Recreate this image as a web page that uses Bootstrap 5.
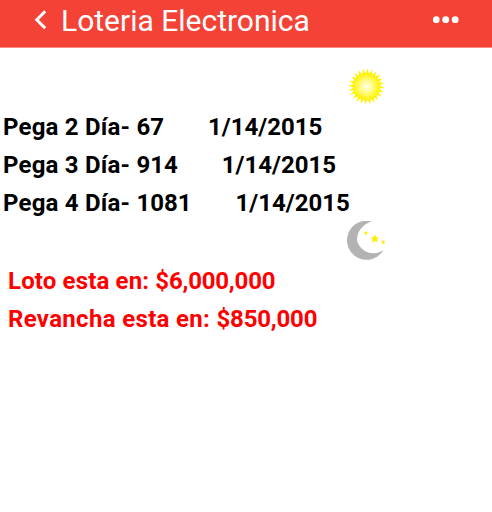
<!DOCTYPE html>
<html lang="es">
  <head>
    <meta charset="utf-8">
    <meta name="viewport" content="width=device-width, initial-scale=1">
    <title>Loteria Electronica</title>
    <link href="https://cdn.jsdelivr.net/npm/bootstrap@5.3.0/dist/css/bootstrap.min.css" rel="stylesheet">
    <style>
      body { font-family: Roboto, "Liberation Sans", sans-serif; color: #000; overflow: hidden; }
      .topbar { height: 48px; background: #f44336; border-bottom: 1px solid #f88a81; padding: 0 33px 0 34px; }
      .topbar h1 { font-size: 30px; line-height: 42px; font-weight: 400; }
      .back { width: 14px; height: 40px; margin-right: 13px; }
      .sun-row { height: 60px; padding: 20px 0 0 348px; }
      .moon-row { height: 41px; padding: 0 0 0 346px; }
      .moon-row svg { margin-top: -1px; }
      .line { height: 38px; line-height: 38px; font-size: 24px; font-weight: 700; white-space: pre; }
      .draws .line { padding-left: 3px; }
      .draws .tag { letter-spacing: .21px; }
      .jackpots { color: #f00; padding-left: 8px; }
      .jackpots .amount { letter-spacing: -.2px; }
      .loto { letter-spacing: .15px; }
      .revancha { letter-spacing: .33px; }
      .date { margin-left: 44px; }
    </style>
  </head>
  <body class="bg-white">
    <header class="topbar d-flex align-items-start text-white">
      <svg class="back" viewBox="0 0 14 40"><path d="M11.2 11.3 2.8 19.8l8.4 8.5" fill="none" stroke="#fff" stroke-width="3"/></svg>
      <h1 class="m-0 text-nowrap">Loteria Electronica</h1>
      <svg class="ms-auto" width="26" height="40" viewBox="0 0 26 40" fill="#fff"><circle cx="3.2" cy="19.7" r="3.4"/><circle cx="12.7" cy="19.7" r="3.4"/><circle cx="22.2" cy="19.7" r="3.4"/></svg>
    </header>
    <main>
      <div class="sun-row">
        <svg class="d-block" width="37" height="37" viewBox="-18.5 -18.5 37 37">
          <defs>
            <radialGradient id="glow" gradientUnits="userSpaceOnUse" cx="0" cy="0" r="15">
              <stop offset="0" stop-color="#fffff0"/>
              <stop offset=".5" stop-color="#fffa70"/>
              <stop offset=".9" stop-color="#fff200"/>
            </radialGradient>
          </defs>
          <circle r="13.8" fill="url(#glow)"/>
          <polygon id="rays" fill="url(#glow)"/>
        </svg>
      </div>
      <div class="draws">
        <div class="line d-flex"><span class="tag">Pega 2 Día- </span><span>67</span><span class="date">1/14/2015</span></div>
        <div class="line d-flex"><span class="tag">Pega 3 Día- </span><span>914</span><span class="date">1/14/2015</span></div>
        <div class="line d-flex"><span class="tag">Pega 4 Día- </span><span>1081</span><span class="date">1/14/2015</span></div>
      </div>
      <div class="moon-row">
        <svg class="d-block" width="40" height="40" viewBox="0 0 40 40">
          <path d="M26 .6A19.5 19.5 0 1 0 37.5 28.9 17 17 0 0 1 11.2 20.5C10 12 16.5 3 26 .6Z" fill="#b3b3b3"/>
          <g fill="#ffed00">
            <path d="m28.8 13.4 1.3 2.8 3.1.3-2.3 2.1.7 3.1-2.8-1.6-2.7 1.6.6-3.1-2.3-2.1 3.1-.3Z"/>
            <path d="m19.9 9.8.7 1.4 1.5.2-1.1 1.1.3 1.5-1.4-.7-1.4.7.3-1.5-1.1-1.1 1.5-.2Z"/>
            <path d="m37.2 18.9.7 1.4 1.5.2-1.1 1.1.3 1.5-1.4-.7-1.4.7.3-1.5-1.1-1.1 1.5-.2Z"/>
          </g>
        </svg>
      </div>
      <div class="jackpots">
        <div class="line d-flex"><span class="loto">Loto esta en: </span><span class="amount">$6,000,000</span></div>
        <div class="line d-flex"><span class="revancha">Revancha esta en: </span><span class="amount">$850,000</span></div>
      </div>
    </main>
    <script src="https://cdn.jsdelivr.net/npm/bootstrap@5.3.0/dist/js/bootstrap.bundle.min.js"></script>
    <script>
      // sun rays: alternate outer and inner points around the circle
      const points = [];
      const rays = 24;
      for (let i = 0; i < rays * 2; i++) {
        const angle = i * Math.PI / rays + 0.06;
        const radius = i % 2 ? 12.5 : 18.3;
        points.push((radius * Math.cos(angle)).toFixed(2) + ',' + (radius * Math.sin(angle)).toFixed(2));
      }
      document.getElementById('rays').setAttribute('points', points.join(' '));
    </script>
  </body>
</html>
